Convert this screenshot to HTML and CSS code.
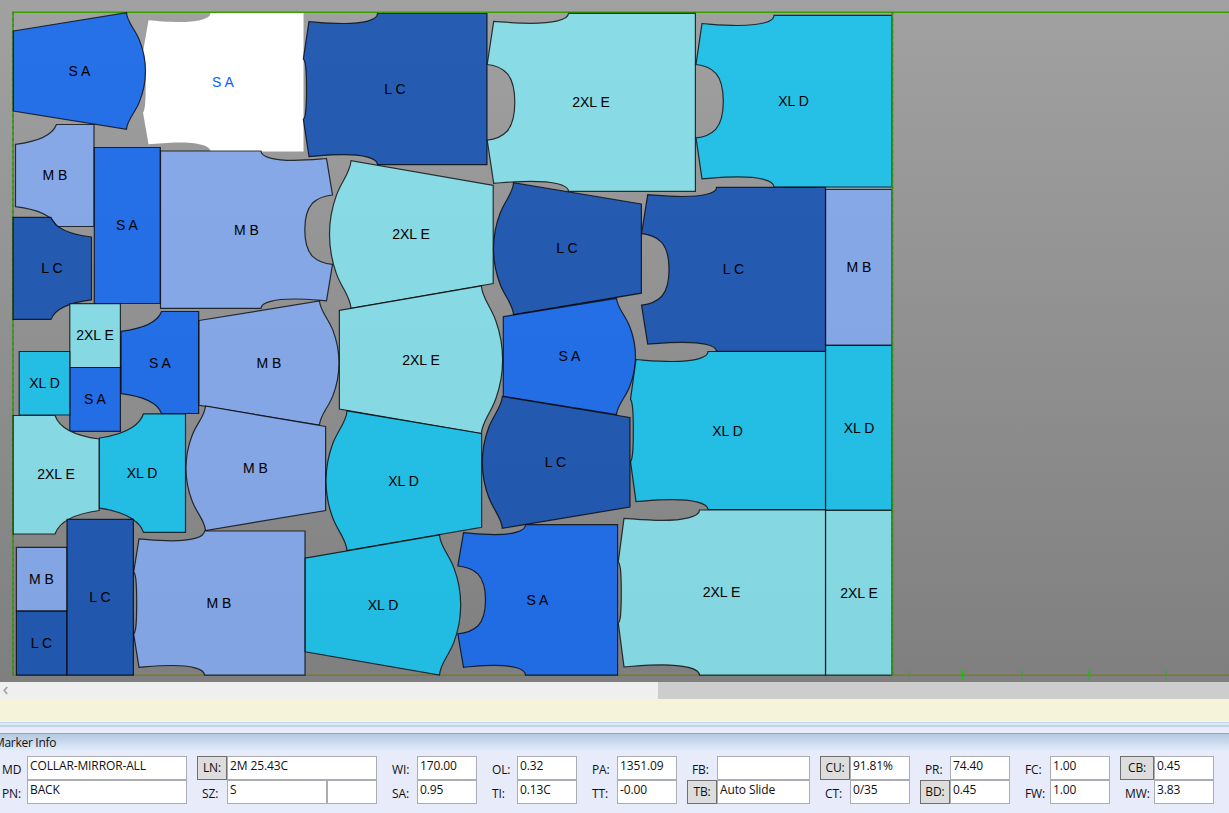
FILE: index.html
```html
<!DOCTYPE html>
<html lang="en">
<head>
<meta charset="utf-8">
<title>Marker Info</title>
<link rel="stylesheet" href="styles.css">
</head>
<body>
<div class="app">
  <main class="canvas">
    <svg class="marker" id="marker" width="1229" height="682" viewBox="0 0 1229 682">
      <g class="bounds">
        <path class="edge-soft" d="M12 11.5H1229M12 674.5H1229"/>
        <path class="edge" d="M12 12.5H1229"/>
        <path class="edge edge-bottom" d="M12 675.5H1229"/>
        <path class="side" d="M13 12V676"/>
        <path class="side-dash" d="M13 12V676"/>
        <path class="tick" d="M909.5 670V680M962.5 670V680M1021.7 670V680M1089 670V680M1165.7 670V680"/>
      </g>
      <g id="pieces"></g>
      <g class="bounds">
        <path class="side" d="M892.4 12V676"/>
        <path class="side-dash" d="M892.4 12V676"/>
      </g>
      <g id="labels"></g>
    </svg>
  </main>
  <div class="scrollbar">
    <div class="track"><svg width="9" height="9" viewBox="0 0 9 9"><path d="M7.3 1L4.2 4.5L7.3 8" fill="none" stroke="#a3a3a3" stroke-width="1.7"/></svg></div>
    <div class="thumb"></div>
  </div>
  <div class="message"></div>
  <div class="splitter"></div>
  <section class="panel">
    <header class="title"><span>Marker Info</span></header>
    <div class="groups">
      <div class="group first">
        <span class="label">MD</span><span class="field">COLLAR-MIRROR-ALL</span>
        <span class="label">PN:</span><span class="field">BACK</span>
      </div>
      <div class="group wide">
        <button class="btn">LN:</button><span class="field">2M 25.43C</span>
        <span class="label">SZ:</span><span class="pair"><span class="field">S</span><span class="field"></span></span>
      </div>
      <div class="group">
        <span class="label">WI:</span><span class="field">170.00</span>
        <span class="label">SA:</span><span class="field">0.95</span>
      </div>
      <div class="group">
        <span class="label">OL:</span><span class="field">0.32</span>
        <span class="label">TI:</span><span class="field">0.13C</span>
      </div>
      <div class="group">
        <span class="label">PA:</span><span class="field">1351.09</span>
        <span class="label">TT:</span><span class="field">-0.00</span>
      </div>
      <div class="group mid">
        <span class="label">FB:</span><span class="field"></span>
        <button class="btn">TB:</button><span class="field">Auto Slide</span>
      </div>
      <div class="group">
        <button class="btn">CU:</button><span class="field">91.81%</span>
        <span class="label">CT:</span><span class="field">0/35</span>
      </div>
      <div class="group">
        <span class="label">PR:</span><span class="field">74.40</span>
        <button class="btn">BD:</button><span class="field">0.45</span>
      </div>
      <div class="group">
        <span class="label">FC:</span><span class="field">1.00</span>
        <span class="label">FW:</span><span class="field">1.00</span>
      </div>
      <div class="group last">
        <button class="btn">CB:</button><span class="field">0.45</span>
        <span class="label">MW:</span><span class="field">3.83</span>
      </div>
    </div>
  </section>
</div>
<script src="marker.js"></script>
</body>
</html>
```

FILE: styles.css
```css
* { box-sizing: border-box; }

body {
  margin: 0;
  background: #e8ebfa;
  color: #111;
  font-family: "Open Sans", "Noto Sans", sans-serif;
  font-size: 12px;
  letter-spacing: -0.12px;
  overflow: hidden;
}

.app {
  display: flex;
  flex-direction: column;
  width: 1229px;
  height: 813px;
}

.canvas {
  height: 682px;
  background: linear-gradient(#a1a1a1, #7f7f7f);
}

.marker { display: block; }

.piece {
  stroke: #000;
  stroke-opacity: 0.75;
  stroke-width: 1.2;
  fill-opacity: 0.85;
}
.size-s { fill: rgb(17, 103, 245); }
.size-m { fill: rgb(131, 170, 243); }
.size-l { fill: rgb(17, 80, 180); }
.size-xl { fill: rgb(18, 199, 244); }
.size-2xl { fill: rgb(133, 229, 241); }
.piece.selected {
  fill: #fff;
  fill-opacity: 1;
  stroke: none;
}

.piece-label {
  font-family: "Liberation Sans", Arial, sans-serif;
  font-size: 14px;
  letter-spacing: 0;
  text-anchor: middle;
  fill: #000;
}
.piece-label.selected { fill: #0a60ff; }

.bounds path { fill: none; }
.edge-soft { stroke: #7a7a2c; stroke-opacity: 0.55; }
.edge { stroke: #35a200; }
.edge-bottom { stroke-opacity: 0.8; }
.side { stroke: #2f9a18; stroke-width: 1.6; stroke-opacity: 0.9; }
.side-dash { stroke: #4c7a20; stroke-width: 1.6; stroke-dasharray: 3 3; stroke-opacity: 0.7; }
.tick { stroke: #0fc40f; stroke-width: 1.2; }

.scrollbar {
  display: flex;
  height: 17px;
  background: #cdcdcd;
}
.track {
  display: flex;
  align-items: center;
  width: 658px;
  background: #efefef;
}
.thumb { flex: 1; background: #cdcdcd; }

.message { height: 23px; background: #f5f4da; }

.splitter {
  height: 11px;
  background: linear-gradient(#c0d6f4 0 1px, #e1e9f9 1px 3px, #bfd2f0 3px 5px, #e8ebfa 5px);
}

.panel { flex: 1; }

.title {
  height: 18px;
  border-top: 1px solid #a0a5ad;
  background: linear-gradient(#b4c9e1, #e3edfb);
  line-height: 17px;
  letter-spacing: -0.3px;
}
.title span { margin-left: -6px; }

.groups {
  display: flex;
  gap: 10px;
  padding-top: 5px;
}

.group {
  display: grid;
  grid-template-columns: 30px 60px;
  grid-template-rows: 24px 24px;
}
.group.first { grid-template-columns: 27px 160px; }
.group.wide { grid-template-columns: 30px 150px; }
.group.mid { grid-template-columns: 30px 93px; }
.group.last { grid-template-columns: 34px 60px; }

.label {
  padding: 5px 0 0 5px;
  line-height: 18px;
  white-space: nowrap;
}
.first .label { padding-left: 2px; }

.field {
  height: 24px;
  padding-left: 2px;
  border: 1px solid #abadb3;
  background: #fff;
  line-height: 18px;
  white-space: nowrap;
}

.pair { display: grid; grid-template-columns: 100px 50px; }

.btn {
  height: 24px;
  padding: 0;
  border: 1px solid #707070;
  background: #ddd;
  color: #111;
  font: inherit;
  letter-spacing: inherit;
  line-height: 22px;
}
```

FILE: marker.js
```js
// Outline builders. Every piece is symmetric about its horizontal axis, so a
// half outline is described and then mirrored for the lower side.
const pt = (x, y) => x.toFixed(1) + ' ' + y.toFixed(1);

function rect(x0, y0, x1, y1) {
  return `M${pt(x0, y0)}H${x1}V${y1}H${x0}Z`;
}

function sleeve(flat, flatTop, flatBot, tip, top, bot, apex) {
  const w = apex - tip, mid = (top + bot) / 2, h = (bot - top) / 2;
  const a = (fx, fy) => pt(tip + fx * w, top + fy * h);
  const b = (fx, fy) => pt(tip + fx * w, bot - fy * h);
  return `M${pt(flat, flatTop)}L${pt(tip, top)}` +
    `C${a(.03, .16)} ${a(.45, .28)} ${a(.68, .47)}C${a(.89, .64)} ${a(1, .82)} ${pt(apex, mid)}` +
    `C${b(1, .82)} ${b(.89, .64)} ${b(.68, .47)}C${b(.45, .28)} ${b(.03, .16)} ${pt(tip, bot)}` +
    `L${pt(flat, flatBot)}Z`;
}

function body(side, notch, shoulder, tip, scoop, top, bot, shoulderY, armY) {
  const mid = (top + bot) / 2, dn = shoulder - notch, ds = shoulderY - top;
  const w = scoop - tip, h = mid - armY;
  const flip = y => top + bot - y;
  const n = (fx, fy, m) => { const y = top + fy * ds; return pt(notch + fx * dn, m ? flip(y) : y); };
  const s = (fx, fy, m) => { const y = armY + fy * h; return pt(tip + fx * w, m ? flip(y) : y); };
  return `M${pt(side, top)}L${pt(notch, top)}` +
    `C${n(0, .85)} ${n(.22, 1.25)} ${n(.5, 1.25)}C${n(.7, 1.25)} ${n(.85, 1.1)} ${n(1, 1)}` +
    `L${pt(tip, armY)}C${s(.3, .02)} ${s(.55, .1)} ${s(.73, .24)}C${s(.95, .43)} ${s(1, .68)} ${s(1, 1)}` +
    `C${s(1, .68, 1)} ${s(.95, .43, 1)} ${s(.73, .24, 1)}C${s(.55, .1, 1)} ${s(.3, .02, 1)} ${s(0, 0, 1)}` +
    `L${n(1, 1, 1)}C${n(.85, 1.1, 1)} ${n(.7, 1.25, 1)} ${n(.5, 1.25, 1)}C${n(.22, 1.25, 1)} ${n(0, .85, 1)} ${pt(notch, bot)}` +
    `L${pt(side, bot)}Z`;
}

function yoke(side, notch, tip, top, bot, tipY) {
  const dn = tip - notch, d = tipY - top;
  return `M${pt(side, top)}L${pt(notch, top)}` +
    `C${pt(notch + .06 * dn, top + .33 * d)} ${pt(notch + .28 * dn, top + .82 * d)} ${pt(tip, tipY)}` +
    `L${pt(tip, top + bot - tipY)}` +
    `C${pt(notch + .28 * dn, bot - .82 * d)} ${pt(notch + .06 * dn, bot - .33 * d)} ${pt(notch, bot)}` +
    `L${pt(side, bot)}Z`;
}

const S = 'S A', M = 'M B', L = 'L C', X = 'XL D', XX = '2XL E';
const pieces = [
  [S, 223, 82, body(303.5, 210.5, 148.5, 143, 145.7, 13, 151.5, 20.3, 52), true],
  [S, 79.5, 71, sleeve(13.3, 31, 111, 126.5, 12.7, 129.3, 145.5)],
  [L, 395, 89, body(487, 377.5, 309, 303.3, 306.5, 13.5, 164.7, 21.5, 59)],
  [XX, 591, 102, body(695.4, 568.5, 493.7, 487.2, 514.8, 13.3, 191.3, 21.3, 64.5)],
  [X, 793.5, 101, body(892, 774, 702, 696, 723.3, 15.4, 187, 23.5, 64.5)],
  [M, 55, 175, yoke(94, 56.5, 15.5, 124.5, 226.5, 144.3)],
  [L, 52, 268, yoke(13, 51, 91.5, 217.4, 319.4, 237)],
  [S, 127, 225, rect(94.3, 147.5, 160.3, 303.5)],
  [M, 246.5, 230, body(160.5, 261, 326.5, 332.5, 304.8, 151, 308.4, 158.5, 195)],
  [XX, 411, 234, sleeve(493.2, 185.3, 283.5, 351, 160.7, 308.3, 329.5)],
  [L, 567, 248, sleeve(641.4, 204, 293.2, 513.5, 182.7, 314.7, 493.5)],
  [L, 733.5, 269, body(825.5, 716.5, 647.7, 641.5, 669, 187.4, 351.4, 194.7, 233.7)],
  [M, 859, 267, rect(825.6, 189.5, 892, 345.4)],
  [XX, 95, 335, rect(69.8, 303.6, 120.4, 367.5)],
  [S, 95, 399, rect(69.8, 367.5, 120.4, 431.4)],
  [X, 44.5, 383, rect(19.2, 351.5, 69.8, 415)],
  [S, 160, 363, yoke(198.7, 161.5, 121, 311.5, 413.5, 331.3)],
  [M, 269, 363, sleeve(199, 320.5, 405.3, 319.5, 301, 425, 339)],
  [XX, 421, 360, sleeve(339.4, 310.4, 409, 481.4, 286, 433.5, 502.6)],
  [S, 569.5, 356, sleeve(503.3, 316.7, 396.3, 616.5, 298.3, 414.7, 635.5)],
  [X, 727.5, 431, body(825.5, 708, 636, 630.5, 633.3, 351.5, 509.6, 359.5, 399.5)],
  [X, 859, 428, rect(825.6, 345.4, 892, 510.3)],
  [XX, 56, 474, yoke(13.2, 55, 99.2, 415.5, 534, 439)],
  [X, 142, 473, yoke(185.5, 143.5, 99.4, 413.8, 532.4, 438)],
  [M, 255.5, 468, sleeve(325.6, 426.5, 510.5, 205.5, 406, 530.5, 186)],
  [X, 403.5, 481, sleeve(481.6, 433.5, 527.3, 347, 411, 550.6, 326)],
  [L, 555.5, 462, sleeve(630, 417.5, 507, 502.3, 396.5, 528.3, 482.3)],
  [M, 41.5, 579, rect(16.4, 547.4, 67, 611.2)],
  [L, 41.5, 643, rect(16.4, 611.2, 67, 675.2)],
  [L, 100, 597, rect(67, 519.4, 133.4, 675.2)],
  [M, 219, 603, body(305, 204.5, 139, 133.7, 136.7, 531, 675.2, 538.8, 572)],
  [X, 383, 605, sleeve(305.2, 558.2, 651.8, 439.5, 535, 675, 460.7)],
  [S, 537.5, 600, body(617.6, 525.5, 463.5, 457.8, 485.5, 524.7, 675.2, 532.6, 566)],
  [XX, 721.5, 592, body(825.5, 699.5, 624, 618.3, 621.3, 510, 675.2, 518.3, 562)],
  [XX, 859, 593, rect(825.6, 510.3, 892, 675.2)]
];

const NS = 'http://www.w3.org/2000/svg';
const shapes = document.getElementById('pieces');
const labels = document.getElementById('labels');
for (const [name, x, y, d, selected] of pieces) {
  const state = selected ? ' selected' : '';
  const path = document.createElementNS(NS, 'path');
  path.setAttribute('class', 'piece size-' + name.split(' ')[0].toLowerCase() + state);
  path.setAttribute('d', d);
  shapes.append(path);
  const text = document.createElementNS(NS, 'text');
  text.setAttribute('class', 'piece-label' + state);
  text.setAttribute('x', x);
  text.setAttribute('y', y + 5);
  text.textContent = name;
  labels.append(text);
}
```
